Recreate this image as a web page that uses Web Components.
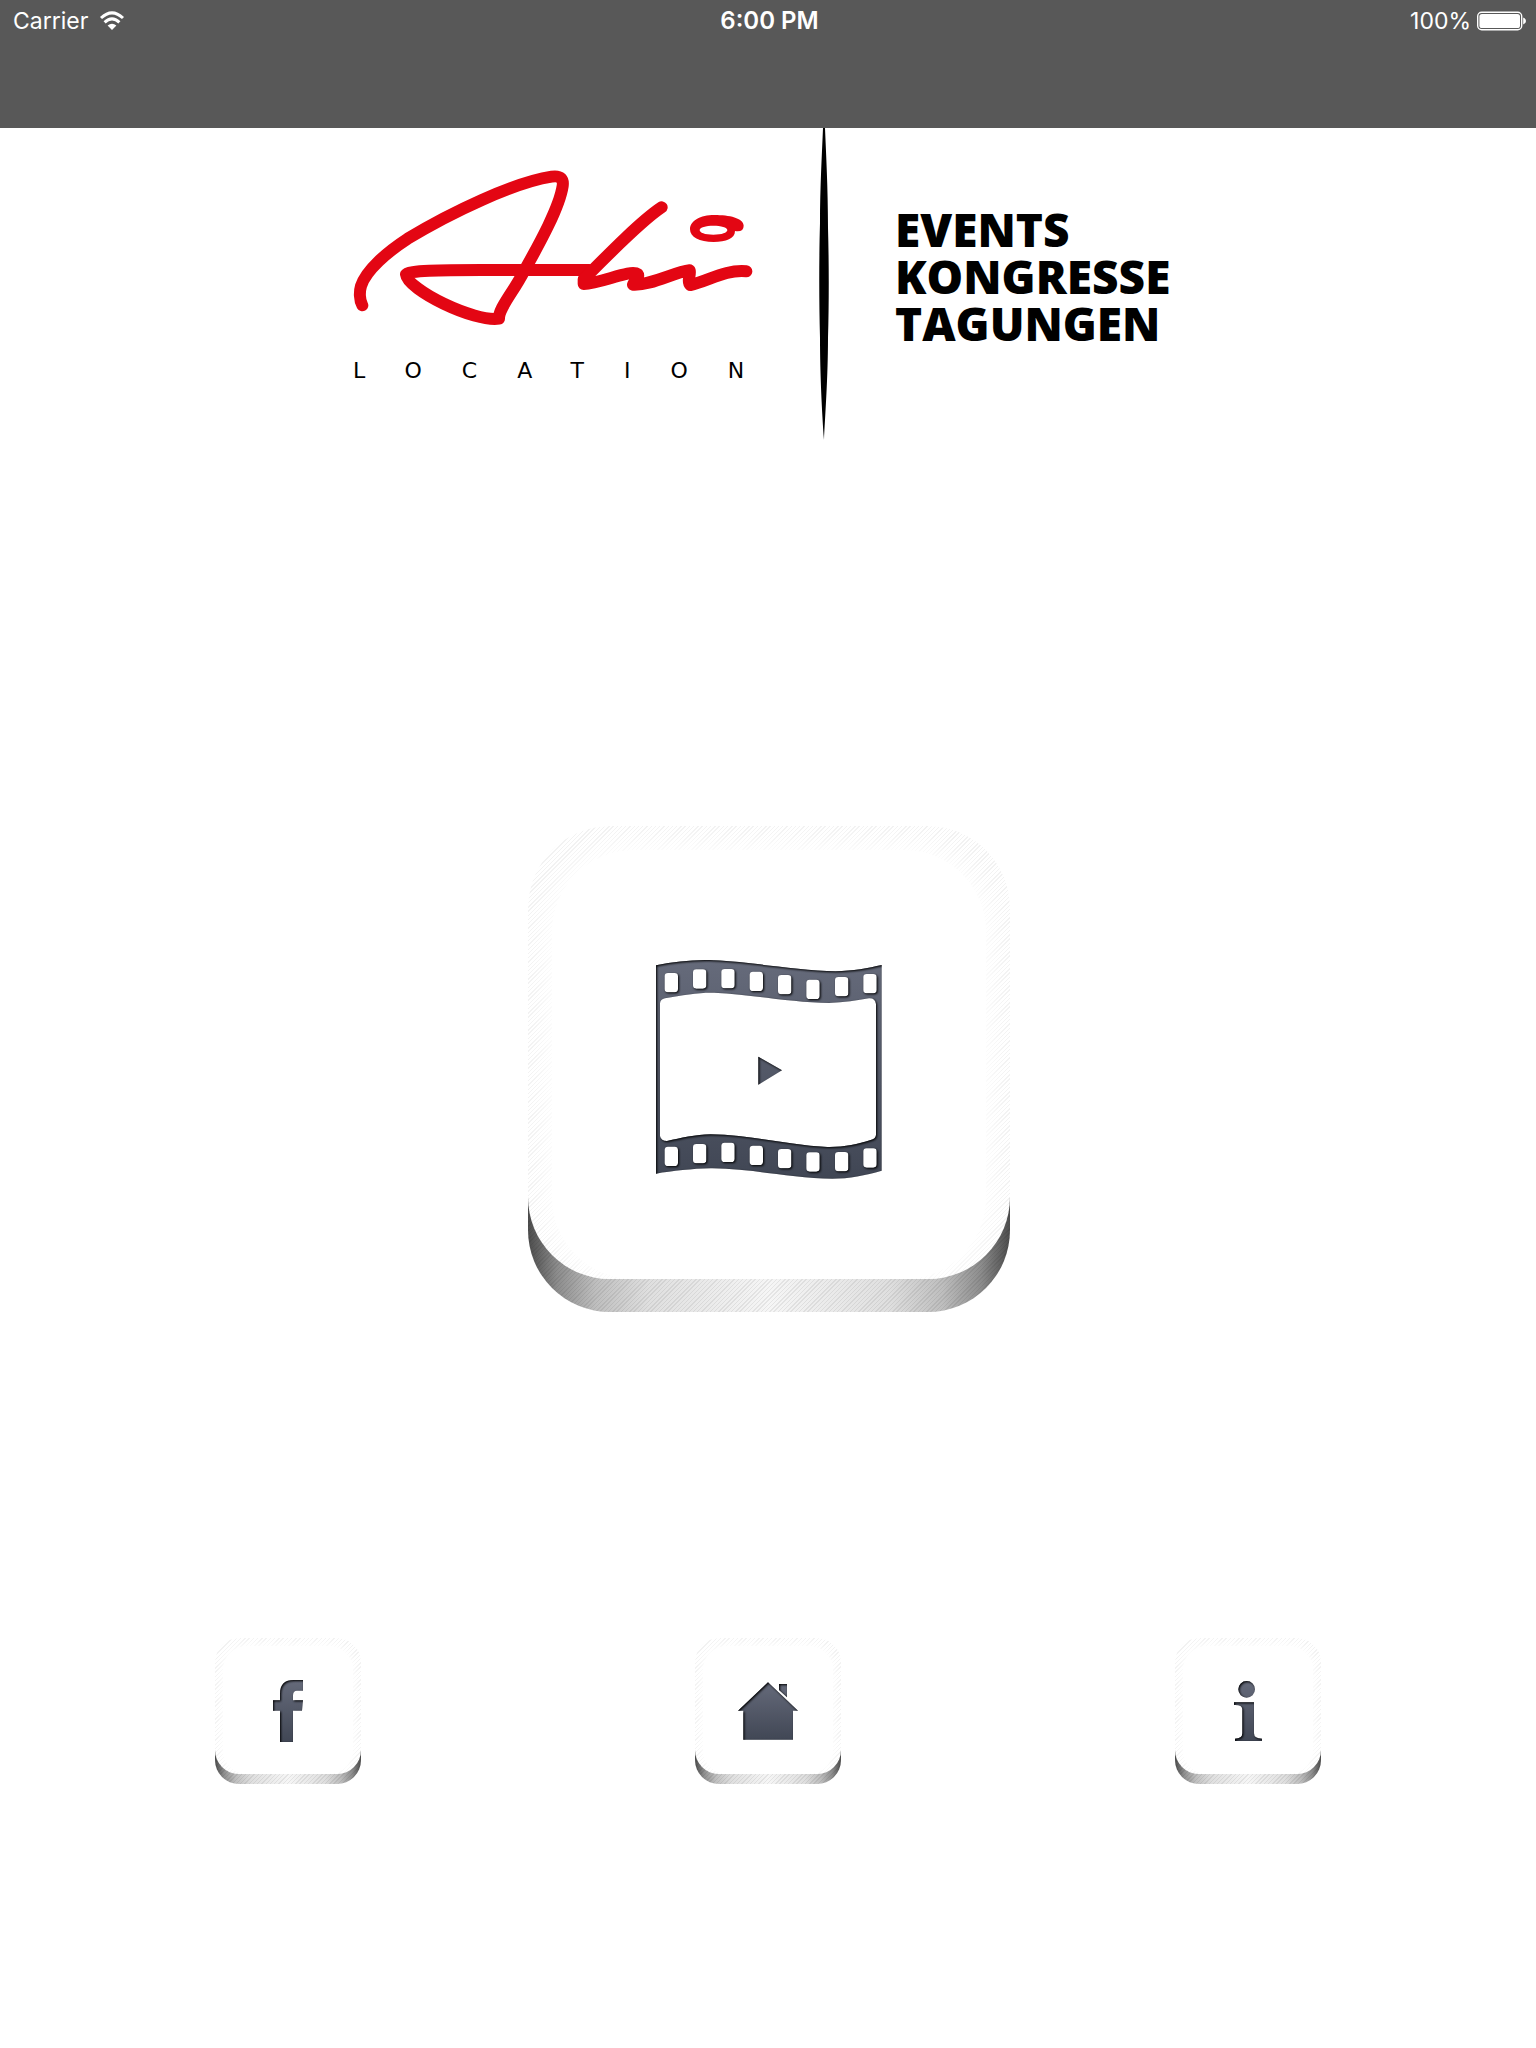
<!DOCTYPE html>
<html lang="de">
<head>
<meta charset="utf-8">
<meta name="viewport" content="width=device-width, initial-scale=1">
<title>Ahi Location</title>
<style>
    body {
        margin: 0;
        background: #fff;
        font-family: Inter, "Liberation Sans", sans-serif;
    }
</style>
</head>
<body>
<app-screen>
    <status-bar slot="top" carrier="Carrier" time="6:00 PM" battery="100%"></status-bar>
    <brand-banner slot="brand">
        <span slot="place">LOCATION</span>
        <span slot="line">EVENTS</span>
        <span slot="line">KONGRESSE</span>
        <span slot="line">TAGUNGEN</span>
    </brand-banner>
    <key-button slot="hero" size="large" label="Video"><app-icon name="film"></app-icon></key-button>
    <key-button slot="nav" label="Facebook"><app-icon name="facebook"></app-icon></key-button>
    <key-button slot="nav" label="Home"><app-icon name="home"></app-icon></key-button>
    <key-button slot="nav" label="Info"><app-icon name="info"></app-icon></key-button>
</app-screen>

<script>
class AppScreen extends HTMLElement {
    constructor() {
        super();
        const shadow = this.attachShadow({ mode: 'open' });
        shadow.innerHTML = `
            <style>
                :host { display: block; }
                header { background: #585858; padding-bottom: 86px; }
                .hero { display: flex; justify-content: center; padding: 386px 0 0 2px; }
                nav {
                    display: flex;
                    justify-content: space-between;
                    padding: 326px 14% 264px;
                }
            </style>
            <header><slot name="top"></slot></header>
            <main>
                <slot name="brand"></slot>
                <div class="hero"><slot name="hero"></slot></div>
            </main>
            <nav><slot name="nav"></slot></nav>
        `;
    }
}

class StatusBar extends HTMLElement {
    constructor() {
        super();
        const shadow = this.attachShadow({ mode: 'open' });
        shadow.innerHTML = `
            <style>
                :host {
                    display: grid;
                    grid-template-columns: 1fr auto 1fr;
                    align-items: center;
                    height: 42px;
                    padding: 0 10px 0 13px;
                    color: #fff;
                    font-size: 23px;
                    line-height: 42px;
                }
                div { display: flex; align-items: center; }
                .left { gap: 11px; }
                .right { gap: 6px; justify-content: flex-end; }
                .time { font-size: 24px; font-weight: 600; }
                svg { display: block; }
            </style>
            <div class="left">
                <span>${this.getAttribute('carrier')}</span>
                <svg width="26" height="20" viewBox="0 0 26 20" fill="none" stroke="#fff" stroke-width="3" aria-hidden="true">
                    <path d="M2 7Q13-3.4 24 7"/>
                    <path d="M5.6 11.4Q13 4.4 20.4 11.4"/>
                    <path d="M13 19L8.6 14.6Q13 10.8 17.4 14.6Z" fill="#fff" stroke="none"/>
                </svg>
            </div>
            <div class="time">${this.getAttribute('time')}</div>
            <div class="right">
                <span>${this.getAttribute('battery')}</span>
                <svg width="49" height="20" viewBox="0 0 49 20" aria-hidden="true">
                    <rect x="0.7" y="1.2" width="44" height="17.6" rx="4" fill="none" stroke="#fff" stroke-width="1.4"/>
                    <rect x="2.4" y="2.9" width="40.6" height="14.2" rx="2.6" fill="#fff"/>
                    <path d="M46.2 6.6Q49 7.6 49 10T46.2 13.4Z" fill="#fff"/>
                </svg>
            </div>
        `;
    }
}

class BrandBanner extends HTMLElement {
    constructor() {
        super();
        const shadow = this.attachShadow({ mode: 'open' });
        shadow.innerHTML = `
            <style>
                :host {
                    display: flex;
                    justify-content: center;
                    align-items: flex-start;
                    gap: 66px;
                    color: #000;
                }
                svg { display: block; }
                .sign { width: 400px; padding-top: 38px; }
                .place {
                    margin-top: 29px;
                    font-family: "DejaVu Sans", sans-serif;
                    font-size: 22px;
                    line-height: 32px;
                    letter-spacing: 40px;
                    white-space: nowrap;
                }
                .lines {
                    display: grid;
                    width: 288px;
                    padding-top: 78px;
                    font-family: "Open Sans", sans-serif;
                    font-size: 46px;
                    font-weight: 800;
                    line-height: 47px;
                }
            </style>
            <div class="sign">
                <svg width="400" height="160" viewBox="36 48 1200 480" fill="none" stroke="#e30613"
                     stroke-width="36" stroke-linecap="round" stroke-linejoin="round" role="img" aria-label="Ahi">
                    <path d="M64 466C55 450 55 425 60 408C75 360 140 305 200 266C330 187 520 97 632 80C660 76 668 88 665 108C655 175 590 290 550 362C515 430 472 475 474 506C400 517 200 420 195 373C200 362 300 360 420 360H745"/>
                    <path d="M962 172C900 213 800 315 728 388V402C780 400 870 357 890 372C898 382 878 396 876 404C930 407 1000 366 1046 361C1050 378 1036 394 1048 405C1100 395 1150 358 1216 364"/>
                    <path d="M1120 195C1078 195 1047 212 1047 238C1047 262 1075 276 1118 276C1155 276 1182 266 1182 243Q1208 247 1208 227C1207 204 1165 195 1120 195ZM1117 227C1140 227 1159 232 1159 240S1143 254 1117 254S1076 248 1076 240S1095 227 1117 227Z" fill="#e30613" fill-rule="evenodd" stroke="none"/>
                </svg>
                <div class="place"><slot name="place"></slot></div>
            </div>
            <svg width="10" height="312" viewBox="0 0 10 312" aria-hidden="true">
                <path d="M4 0H6C7 25 9 60 9 100C10 135 10 175 9 210C9 250 6 290 5 312C3 285 1 245 1 210C0 175 0 130 1 95C1 60 3 25 4 0Z"/>
            </svg>
            <div class="lines"><slot name="line"></slot></div>
        `;
    }
}

class KeyButton extends HTMLElement {
    constructor() {
        super();
        const shadow = this.attachShadow({ mode: 'open' });
        shadow.innerHTML = `
            <style>
                :host {
                    --side: 146px;
                    --tall: 146px;
                    --radius: 24px;
                    --depth: 10px;
                    --rim: 8px;
                    display: block;
                }
                :host([size="large"]) {
                    --side: 482px;
                    --tall: 486px;
                    --radius: 82px;
                    --depth: 33px;
                    --rim: 24px;
                }
                button {
                    position: relative;
                    display: flex;
                    align-items: center;
                    justify-content: center;
                    width: var(--side);
                    height: var(--tall);
                    padding: 0;
                    border: 0;
                    border-radius: var(--radius);
                    overflow: hidden;
                    cursor: pointer;
                    background:
                        repeating-linear-gradient(135deg, rgba(0, 0, 0, 0.07) 0 1px, transparent 1px 3px) bottom / 100% 50% no-repeat,
                        linear-gradient(90deg, #4c4c4c, #8c8c8c 6%, #bebebe 14%, #dfdfdf 25%, #f6f6f6 50%, #dfdfdf 75%, #bebebe 86%, #8c8c8c 94%, #4c4c4c) bottom / 100% 50% no-repeat;
                }
                /* top face of the key, its hatched rim fades into white */
                .face {
                    position: absolute;
                    inset: 0 0 var(--depth);
                    border-radius: var(--radius);
                    overflow: hidden;
                    background: repeating-linear-gradient(135deg, #f2f2f2 0 1px, #fff 1px 3px);
                }
                .face::before {
                    content: "";
                    position: absolute;
                    inset: var(--rim) var(--rim) 0;
                    border-radius: var(--radius);
                    background: #fff;
                    box-shadow: 0 0 var(--rim) calc(var(--rim) / 4) #fff;
                }
                .icon { position: relative; }
            </style>
            <button type="button" aria-label="${this.getAttribute('label')}">
                <span class="face"></span>
                <span class="icon"><slot></slot></span>
            </button>
        `;
    }
}

function filmPath() {
    const xs = [77, 162, 247, 332, 417, 502, 588, 673];
    const top = [99, 88, 87, 95, 105, 119, 111, 102];
    const bottom = [620, 612, 608, 617, 627, 637, 636, 625];
    const hole = (x, y) => `M${x + 10} ${y}h20q10 0 10 10v38q0 10-10 10h-20q-10 0-10-10v-38q0-10 10-10Z`;
    return 'M51 76C110 65 165 58 225 61C330 65 480 92 590 94C640 93 690 84 728 75V692C680 706 630 716 580 716C460 716 330 684 215 685C160 686 100 693 51 701Z'
        + 'M63 190Q64 178 78 175C130 165 180 157 225 158C330 163 460 188 570 189C615 188 655 181 690 175Q709 174 711 192V585Q710 597 695 600C655 612 615 622 565 621C450 615 330 584 215 583C170 584 125 594 84 603Q66 603 63 588Z'
        + 'M358 350L429 391L358 434Z'
        + xs.map((x, i) => hole(x, top[i]) + hole(x, bottom[i])).join('');
}

// icons are drawn at three units per pixel
const ICONS = {
    film: { box: [48, 54, 684, 666], path: filmPath() },
    facebook: { box: [222, 177, 90, 192], path: 'M243 366V272H222V241H243V222C243 192 258 180 284 180H312V212H294Q282 212 282 226V241H312L309 272H282V366Z' },
    home: { box: [177, 183, 180, 180], path: 'M267 187L357 272H342V359H193V272H177ZM300 192H324V232L300 210Z' },
    info: { box: [219, 180, 84, 186], path: 'M232 208a25 25 0 1 0 50 0a25 25 0 1 0-50 0ZM219 247H279V340Q279 356 303 356V363H222V356Q244 356 244 340V268Q244 254 219 255Z' }
};

class AppIcon extends HTMLElement {
    constructor() {
        super();
        const shadow = this.attachShadow({ mode: 'open' });
        const { box, path } = ICONS[this.getAttribute('name')];
        shadow.innerHTML = `
            <style>
                :host { display: block; }
                svg { display: block; }
            </style>
            <svg width="${box[2] / 3}" height="${box[3] / 3}" viewBox="${box.join(' ')}" aria-hidden="true">
                <defs>
                    <linearGradient id="ink" gradientUnits="userSpaceOnUse" x1="0" y1="${box[1]}" x2="0" y2="${box[1] + box[3]}">
                        <stop offset="0" stop-color="#666b7b"/>
                        <stop offset="1" stop-color="#404654"/>
                    </linearGradient>
                    <filter id="inset" x="-5%" y="-5%" width="110%" height="110%" color-interpolation-filters="sRGB">
                        <feOffset in="SourceAlpha" dx="2" dy="3"/>
                        <feGaussianBlur stdDeviation="3" result="soft"/>
                        <feComposite in="SourceAlpha" in2="soft" operator="out" result="shade"/>
                        <feMerge>
                            <feMergeNode in="SourceGraphic"/>
                            <feMergeNode in="shade"/>
                        </feMerge>
                    </filter>
                </defs>
                <path d="${path}" fill="url(#ink)" fill-rule="evenodd" filter="url(#inset)"/>
            </svg>
        `;
    }
}

customElements.define('app-screen', AppScreen);
customElements.define('status-bar', StatusBar);
customElements.define('brand-banner', BrandBanner);
customElements.define('key-button', KeyButton);
customElements.define('app-icon', AppIcon);
</script>
</body>
</html>
